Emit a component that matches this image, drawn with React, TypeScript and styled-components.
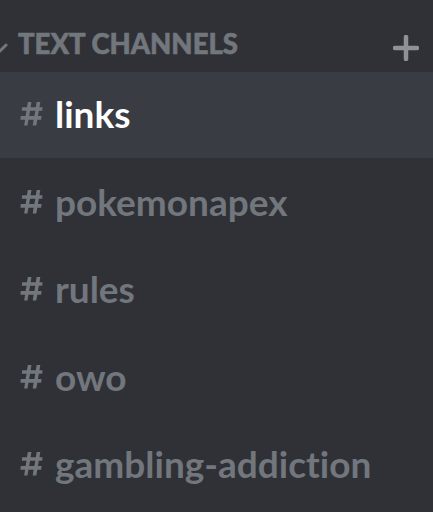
import React from "react";
import styled, { createGlobalStyle } from "styled-components";

const Global = createGlobalStyle`
  html, body { margin: 0; padding: 0; background: #2f3136; }
  body { font-family: Lato, "Open Sans", sans-serif; }
`;

const Sidebar = styled.div`
  width: 433px;
  height: 512px;
  background: #2f3136;
  overflow: hidden;
  display: flex;
  flex-direction: column;
`;

const Header = styled.div`
  height: 72px;
  display: flex;
  align-items: center;
  padding-top: 15px;
  padding-right: 14px;
  box-sizing: border-box;
  color: #72767d;
`;

const Chevron = styled.svg`
  width: 20px;
  height: 20px;
  margin-left: -10px;
  margin-right: 8px;
  margin-top: 8px;
  flex: none;
`;

const HeaderTitle = styled.span`
  flex: 1;
  font-family: Lato, sans-serif;
  font-weight: 900;
  font-size: 27.5px;
  letter-spacing: 0;
  color: #72767d;
  -webkit-text-stroke: 0.6px #72767d;
`;

const PlusIcon = styled.svg`
  width: 26px;
  height: 26px;
  flex: none;
  margin-top: 9px;
`;

const List = styled.div`
  display: flex;
  flex-direction: column;
  gap: 1.5px;
`;

const Row = styled.div<{ $active?: boolean }>`
  height: 86px;
  display: flex;
  align-items: center;
  padding-left: 18px;
  padding-bottom: 3px;
  box-sizing: border-box;
  gap: 12px;
  background: ${(p) => (p.$active ? "#393c43" : "transparent")};
`;

const Hash = styled.svg`
  width: 25px;
  height: 25px;
  flex: none;
  margin-top: 2px;
`;

const Name = styled.span<{ $active?: boolean }>`
  font-family: Lato, sans-serif;
  font-weight: 700;
  font-size: 37px;
  font-variant-ligatures: none;
  color: ${(p) => (p.$active ? "#ffffff" : "#72767d")};
`;

const channels = ["links", "pokemonapex", "rules", "owo", "gambling-addiction"];

const HashIcon = () => (
  <Hash viewBox="0 0 24 24">
    <path
      fill="#72767d"
      d="M5.9 22.5 6.8 17H2.3l.4-3.5h4.6l.9-5H3.6L4 5h4.6l.9-5.5h3.5L12.1 5h5l.9-5.5h3.5L20.6 5h3l-.4 3.5h-3.2l-.9 5h3.5l-.4 3.5H18.5l-.9 5.5h-3.5l.9-5.5h-5l-.9 5.5H5.9ZM11.6 8.5l-.9 5h5l.9-5h-5Z"
    />
  </Hash>
);

export default function App() {
  return (
    <>
      <Global />
      <Sidebar>
        <Header>
          <Chevron viewBox="0 0 20 20">
            <path d="M4 7l6 6 6-6" fill="none" stroke="#72767d" strokeWidth="3" strokeLinecap="round" strokeLinejoin="round" />
          </Chevron>
          <HeaderTitle>TEXT CHANNELS</HeaderTitle>
          <PlusIcon viewBox="0 0 26 26">
            <path d="M13 2v22M2 13h22" stroke="#8e9297" strokeWidth="4.5" strokeLinecap="round" />
          </PlusIcon>
        </Header>
        <List>
          {channels.map((c, i) => (
            <Row key={c} $active={i === 0}>
              <HashIcon />
              <Name $active={i === 0}>{c}</Name>
            </Row>
          ))}
        </List>
      </Sidebar>
    </>
  );
}
